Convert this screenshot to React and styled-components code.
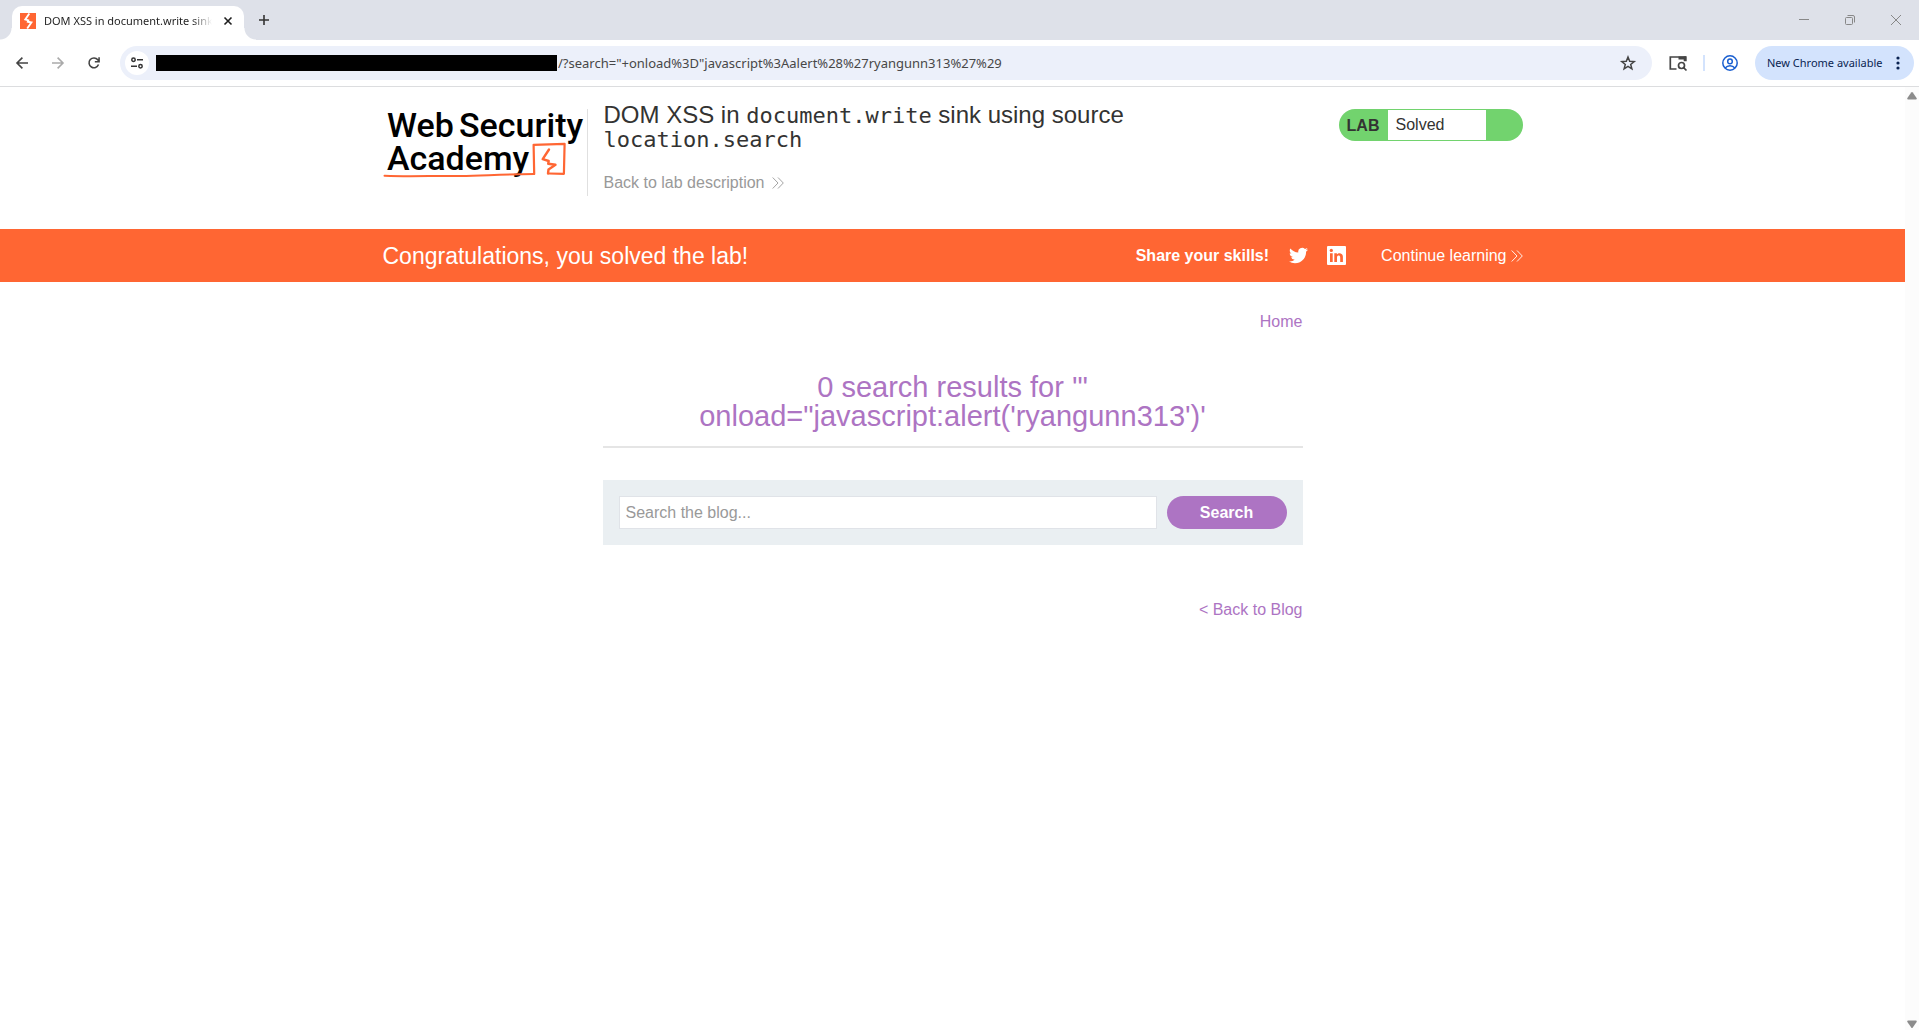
import React from 'react';
import styled, { createGlobalStyle } from 'styled-components';

const ui = "'Noto Sans', 'Open Sans', sans-serif";
const sans = "'Liberation Sans', Arial, sans-serif";
const mono = "'DejaVu Sans Mono', monospace";
const orange = '#ff6633';
const purple = '#ad74c3';

const GlobalStyle = createGlobalStyle`
  *, *::before, *::after { box-sizing: border-box; }
  body { margin: 0; background: #fff; font-family: ${sans}; color: #333332; }
  h1, h2, p { margin: 0; font-weight: 400; }
  button { border: 0; background: none; padding: 0; font: inherit; color: inherit; cursor: pointer; }
  a { color: inherit; text-decoration: none; }
  svg { display: block; flex: none; overflow: visible; }
`;

const Window = styled.div`
  min-height: 100vh;
  display: flex;
  flex-direction: column;
`;

const TabStrip = styled.div`
  height: 40px;
  background: #dee1e9;
  display: flex;
  align-items: flex-end;
  padding-left: 12px;
`;

const Tab = styled.div`
  position: relative;
  width: 232px;
  height: 34px;
  padding: 0 8px 5px;
  display: flex;
  align-items: center;
  gap: 8px;
  background: #fff;
  border-radius: 10px 10px 0 0;
  font: 11px/16px ${ui};
  color: #1f1f1f;
  &::before, &::after {
    content: '';
    position: absolute;
    bottom: 0;
    width: 12px;
    height: 12px;
  }
  &::before { right: 100%; background: radial-gradient(circle at 0 0, transparent 11px, #fff 12px); }
  &::after { left: 100%; background: radial-gradient(circle at 100% 0, transparent 11px, #fff 12px); }
`;

const TabTitle = styled.span`
  flex: 1;
  min-width: 0;
  overflow: hidden;
  white-space: nowrap;
  mask-image: linear-gradient(to right, #000 88%, transparent);
`;

const IconButton = styled.button`
  width: ${p => p.$w || 20}px;
  height: ${p => p.$h || 20}px;
  display: flex;
  flex: none;
  align-items: center;
  justify-content: center;
  border-radius: 50%;
  background: ${p => p.$bg || 'none'};
`;

const NewTab = styled(IconButton)`
  margin: 0 0 10px 10px;
`;

const WindowControls = styled.div`
  margin-left: auto;
  align-self: stretch;
  display: flex;
`;

const Toolbar = styled.div`
  display: flex;
  align-items: center;
  padding: 6px 5px 6px 12px;
  border-bottom: 1px solid #dcdddf;
`;

const NavButtons = styled.div`
  display: flex;
  gap: 16px;
  margin-right: 16px;
`;

const AddressBar = styled.div`
  flex: 1;
  height: 34px;
  display: flex;
  align-items: center;
  padding: 0 14px 0 5px;
  background: #ecf0fa;
  border-radius: 17px;
`;

const Redaction = styled.span`
  width: 401px;
  height: 16px;
  margin-left: 7px;
  background: #000;
`;

const UrlInput = styled.input`
  flex: 1;
  min-width: 0;
  border: 0;
  outline: 0;
  padding: 0 1px;
  background: none;
  font: 13px/20px ${ui};
  color: #474747;
`;

const ToolbarActions = styled.div`
  display: flex;
  align-items: center;
  gap: 15px;
  margin-left: 16px;
`;

const Divider = styled.span`
  width: 2px;
  height: 16px;
  background: #d3e3fd;
`;

const UpdateButton = styled.button`
  width: 159px;
  height: 34px;
  display: flex;
  align-items: center;
  justify-content: space-between;
  padding: 0 14px 0 12px;
  border-radius: 17px;
  background: #d3e3fd;
  color: #0a2351;
  font: 11px/16px ${ui};
  white-space: nowrap;
`;

const Viewport = styled.div`
  flex: 1;
  display: grid;
  grid-template-columns: minmax(0, 1fr) 14px;
`;

const ScrollTrack = styled.div`
  background: #fcfcfc;
  display: flex;
  flex-direction: column;
  justify-content: space-between;
  align-items: center;
  padding: 5px 0 2px;
`;

const Container = styled.div`
  max-width: 1140px;
  margin: 0 auto;
  display: flex;
`;

const LabHeader = styled.header`
  padding: 16px 0 33px;
`;

const LogoLink = styled.a`
  margin-top: 6px;
  height: 87px;
  padding-right: 3px;
  border-right: 1px solid #e0e0e0;
`;

const TitleBlock = styled.div`
  flex: 1;
  max-width: 600px;
  padding-left: 16px;
`;

const LabTitle = styled.h2`
  font-size: 24px;
  line-height: 24px;
  margin-bottom: 22px;
  code { font: 22px/16px ${mono}; }
`;

const BackLink = styled.a`
  display: flex;
  align-items: center;
  gap: 8px;
  width: fit-content;
  font-size: 16px;
  line-height: 20px;
  color: #999;
`;

const LabStatus = styled.div`
  margin: 6px 0 0 auto;
  width: 184px;
  height: 32px;
  display: flex;
  padding: 1px 37px 1px 0;
  border-radius: 16px;
  background: #72d36e;
  font-size: 16px;
  line-height: 29px;
`;

const LabTag = styled.span`
  width: 49px;
  padding-top: 1px;
  text-align: center;
  font-weight: 700;
`;

const LabState = styled.p`
  flex: 1;
  padding-left: 8px;
  background: #fff;
`;

const Banner = styled.section`
  background: ${orange};
  color: #fff;
`;

const BannerRow = styled(Container)`
  height: 53px;
  align-items: center;
  justify-content: space-between;
`;

const Congrats = styled.p`
  font-size: 23px;
  line-height: 28px;
`;

const Share = styled.div`
  display: flex;
  align-items: center;
  font-size: 16px;
  line-height: 20px;
`;

const ShareLabel = styled.strong`
  margin-right: 20px;
`;

const SocialLink = styled.a`
  margin-right: ${p => p.$gap}px;
`;

const ContinueLink = styled.a`
  display: flex;
  align-items: center;
  gap: 4px;
`;

const Blog = styled.main`
  max-width: 700px;
  margin: 0 auto;
  padding-top: 30px;
  font-size: 16px;
  line-height: 20px;
  color: ${purple};
`;

const LinkRow = styled.nav`
  display: flex;
  justify-content: flex-end;
`;

const Results = styled.header`
  margin: 41px 0 32px;
  padding: 0 90px 15px;
  border-bottom: 2px solid #e5e5e5;
  text-align: center;
`;

const ResultsTitle = styled.h1`
  font-size: 29px;
  line-height: 29px;
`;

const SearchForm = styled.form`
  display: flex;
  gap: 10px;
  margin-bottom: 55px;
  padding: 16px;
  background: #eaeff2;
`;

const SearchInput = styled.input`
  flex: 1;
  min-width: 0;
  height: 33px;
  padding: 0 6px;
  border: 1px solid #e0e3e8;
  border-radius: 0;
  outline: 0;
  background: #fff;
  font: 16px/20px ${sans};
  color: #333332;
  &::placeholder { color: #999; opacity: 1; }
`;

const SearchButton = styled.button`
  width: 120px;
  height: 33px;
  border-radius: 17px;
  background: ${purple};
  color: #fff;
  font: 700 16px/20px ${sans};
`;

const Chevrons = () => (
  <svg width="12" height="12" viewBox="0 0 12 12" fill="none" stroke="currentColor" strokeWidth="0.9" aria-hidden="true">
    <path d="M0.7 0.5 6 6 0.7 11.5M6 0.5 11.3 6 6 11.5" />
  </svg>
);

const Favicon = () => (
  <svg width="16" height="16" viewBox="0 0 16 16" aria-hidden="true">
    <path fill={orange} d="M0 0h16v16H0z" />
    <path fill="none" stroke="#fff" strokeWidth="1.9" d="M9.300.5 5.300 6.400 8.300 7.300 7.800 8.800 11.400 9.500 7.200 15.500" />
  </svg>
);

const Logo = () => (
  <svg width="201" height="72" viewBox="0 0 201 72" role="img" aria-label="Web Security Academy">
    <g fill="#000" fontFamily="Roboto, sans-serif" fontWeight="500" fontSize="34">
      <text x="4" y="28">Web</text>
      <text x="76" y="28">Security</text>
      <text x="4" y="61">Academy</text>
    </g>
    <g fill="none" stroke={orange} strokeLinejoin="round" strokeLinecap="round">
      <path strokeWidth="2" d="M1.500 66.800C30 68 50 66.600 75 67c20 .3 40-1.800 76-2" />
      <path strokeWidth="2.200" d="M151.200 65 150.600 35.800l31-.9-.7 29.900-14.800-.3" />
      <path strokeWidth="2.400" d="m166 40.500-6.300 9.700 6 1.800-.5 2.800 7.300 1-7 4.700-.5 4" />
    </g>
  </svg>
);

const stroke = { fill: 'none', stroke: 'currentColor' };

export default function App() {
  return (
    <>
      <GlobalStyle />
      <Window>
        <TabStrip>
          <Tab>
            <Favicon />
            <TabTitle>DOM XSS in document.write sink</TabTitle>
            <IconButton $w={16} $h={16} aria-label="Close tab">
              <svg width="8" height="8" viewBox="0 0 8 8" {...stroke} strokeWidth="1.6"><path d="m.5.5 7 7m0-7-7 7" /></svg>
            </IconButton>
          </Tab>
          <NewTab aria-label="New tab">
            <svg width="10" height="10" viewBox="0 0 10 10" {...stroke} strokeWidth="1.6"><path d="M5 0v10M0 5h10" /></svg>
          </NewTab>
          <WindowControls>
            <IconButton $w={46} $h={40} aria-label="Minimize">
              <svg width="10" height="10" viewBox="0 0 10 10" {...stroke} color="#888"><path d="M0 4.5h10" /></svg>
            </IconButton>
            <IconButton $w={46} $h={40} aria-label="Restore">
              <svg width="10" height="10" viewBox="0 0 10 10" {...stroke} color="#888">
                <rect x=".5" y="2.5" width="7" height="7" rx="1" />
                <path d="M2.5.5H8A1.5 1.5 0 0 1 9.500 2v5.500" />
              </svg>
            </IconButton>
            <IconButton $w={46} $h={40} aria-label="Close">
              <svg width="10" height="10" viewBox="0 0 10 10" {...stroke} color="#888"><path d="m0 0 10 10M10 0 0 10" /></svg>
            </IconButton>
          </WindowControls>
        </TabStrip>

        <Toolbar>
          <NavButtons>
            <IconButton aria-label="Back">
              <svg width="12" height="12" viewBox="0 0 12 12" {...stroke} color="#444" strokeWidth="1.6"><path d="M12 6H1.200M6.400.6 1 6l5.400 5.400" /></svg>
            </IconButton>
            <IconButton aria-label="Forward">
              <svg width="12" height="12" viewBox="0 0 12 12" {...stroke} color="#aaa" strokeWidth="1.6"><path d="M0 6h10.800M5.600.6 11 6l-5.400 5.400" /></svg>
            </IconButton>
            <IconButton aria-label="Reload">
              <svg width="12" height="12" viewBox="0 0 13 13" {...stroke} color="#444" strokeWidth="1.7"><path d="M11.400 8.200A5.300 5.300 0 1 1 10.600 3L12 4.800M12 .4v4.700H7.400" /></svg>
            </IconButton>
          </NavButtons>
          <AddressBar>
            <IconButton $w={24} $h={24} $bg="#fff" aria-label="View site information">
              <svg width="12" height="12" viewBox="0 0 12 12" {...stroke} color="#333" strokeWidth="1.5">
                <circle cx="2.500" cy="2.700" r="1.700" /><path d="M6 2.700h6M0 9.200h6" /><circle cx="9.500" cy="9.200" r="1.700" />
              </svg>
            </IconButton>
            <Redaction />
            <UrlInput
              aria-label="Address"
              defaultValue={'/?search="+onload%3D"javascript%3Aalert%28%27ryangunn313%27%29'}
            />
            <IconButton aria-label="Bookmark this tab">
              <svg width="16" height="16" viewBox="0 0 16 16" {...stroke} color="#444" strokeWidth="1.5"><path d="m8 2 1.700 4.200 4.500.3-3.500 2.900 1.200 4.400L8 11.400l-3.900 2.400 1.200-4.400L1.800 6.500l4.500-.3z" /></svg>
            </IconButton>
          </AddressBar>
          <ToolbarActions>
            <IconButton aria-label="Search with Lens">
              <svg width="18" height="16" viewBox="0 0 18 16" {...stroke} color="#444" strokeWidth="1.700">
                <path d="M7.500 14H1.300V2H17" /><path d="M9.500 3.100H17M16.200 1.200v5" strokeWidth="3" />
                <circle cx="12.500" cy="10.500" r="3" /><path d="m14.600 12.600 2.900 2.900" />
              </svg>
            </IconButton>
            <Divider />
            <IconButton aria-label="Profile">
              <svg width="16" height="16" viewBox="0 0 16 16" {...stroke} color="#1a5fd0" strokeWidth="1.500">
                <circle cx="8" cy="8" r="7.200" /><circle cx="8" cy="6.400" r="2.300" /><path d="M3.200 13c2.400-3 7.200-3 9.600 0" />
              </svg>
            </IconButton>
            <UpdateButton>
              New Chrome available
              <svg width="4" height="14" viewBox="0 0 4 14" fill="currentColor"><circle cx="2" cy="2" r="1.600" /><circle cx="2" cy="7" r="1.600" /><circle cx="2" cy="12" r="1.600" /></svg>
            </UpdateButton>
          </ToolbarActions>
        </Toolbar>

        <Viewport>
          <div>
            <LabHeader>
              <Container>
                <LogoLink href="#academy"><Logo /></LogoLink>
                <TitleBlock>
                  <LabTitle>DOM XSS in <code>document.write</code> sink using source <code>location.search</code></LabTitle>
                  <BackLink href="#description">Back to lab description <Chevrons /></BackLink>
                </TitleBlock>
                <LabStatus>
                  <LabTag>LAB</LabTag>
                  <LabState>Solved</LabState>
                </LabStatus>
              </Container>
            </LabHeader>

            <Banner>
              <BannerRow>
                <Congrats>Congratulations, you solved the lab!</Congrats>
                <Share>
                  <ShareLabel>Share your skills!</ShareLabel>
                  <SocialLink href="#twitter" $gap={19} aria-label="Share on Twitter">
                    <svg width="19" height="19" viewBox="0 0 24 24" fill="currentColor"><path d="M23.950 4.570a10 10 0 0 1-2.820.770 4.960 4.960 0 0 0 2.160-2.720c-.950.550-2 .960-3.130 1.180a4.920 4.920 0 0 0-8.380 4.480C7.690 8.100 4.070 6.130 1.640 3.160a4.820 4.820 0 0 0-.670 2.480c0 1.710.870 3.210 2.190 4.100a4.900 4.900 0 0 1-2.230-.620v.060a4.920 4.920 0 0 0 3.950 4.830 5 5 0 0 1-2.210.080 4.940 4.940 0 0 0 4.600 3.420A9.870 9.870 0 0 1 0 19.540a13.990 13.990 0 0 0 7.550 2.210c9.050 0 14-7.500 14-13.980 0-.210 0-.420-.020-.630a9.940 9.940 0 0 0 2.460-2.550z" /></svg>
                  </SocialLink>
                  <SocialLink href="#linkedin" $gap={35} aria-label="Share on LinkedIn">
                    <svg width="19" height="19" viewBox="0 0 19 19">
                      <rect width="19" height="19" rx="1" fill="currentColor" />
                      <g fill={orange}><circle cx="4.300" cy="4.400" r="1.600" /><path d="M3 7.300h2.700V16H3zM7.300 7.300h2.600v1.200c1.300-2.100 6-2.100 6 2.400V16h-2.700v-4.600c0-2.500-3.200-2.300-3.200 0V16H7.300z" /></g>
                    </svg>
                  </SocialLink>
                  <ContinueLink href="#continue">Continue learning <Chevrons /></ContinueLink>
                </Share>
              </BannerRow>
            </Banner>

            <Blog>
              <LinkRow><a href="#home">Home</a></LinkRow>
              <Results>
                <ResultsTitle>{`0 search results for '" onload="javascript:alert('ryangunn313')'`}</ResultsTitle>
              </Results>
              <SearchForm onSubmit={e => e.preventDefault()}>
                <SearchInput type="text" name="search" placeholder="Search the blog..." aria-label="Search the blog" />
                <SearchButton type="submit">Search</SearchButton>
              </SearchForm>
              <LinkRow><a href="#blog">&lt; Back to Blog</a></LinkRow>
            </Blog>
          </div>
          <ScrollTrack aria-hidden="true">
            <svg width="10" height="8" viewBox="0 0 10 8" fill="#8b8b8b"><path d="M4.200.6a1 1 0 0 1 1.600 0L9.600 6A1 1 0 0 1 9 7.500H1A1 1 0 0 1 .4 6z" /></svg>
            <svg width="10" height="8" viewBox="0 0 10 8" fill="#8b8b8b"><path d="M4.200 7.400a1 1 0 0 0 1.600 0L9.600 2A1 1 0 0 0 9 .5H1A1 1 0 0 0 .4 2z" /></svg>
          </ScrollTrack>
        </Viewport>
      </Window>
    </>
  );
}
